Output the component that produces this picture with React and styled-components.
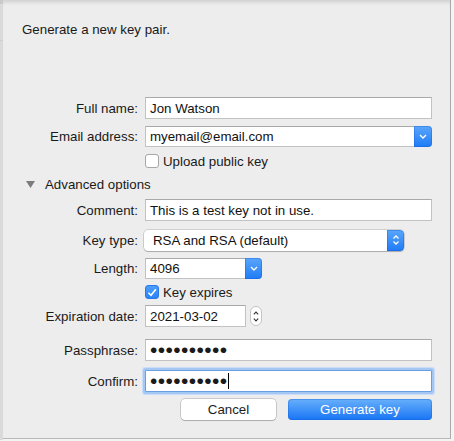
import React from "react";
import styled, { createGlobalStyle, css } from "styled-components";

const GlobalStyle = createGlobalStyle`
  html, body {
    margin: 0;
    padding: 0;
    background: #f4f4f4;
  }
  body {
    font-family: "Liberation Sans", Arial, sans-serif;
    font-size: 13.3px;
    color: #1a1a1a;
  }
`;

const Screen = styled.div`
  display: flex;
  width: 454px;
  height: 441px;
  overflow: hidden;
`;

const BehindStrip = styled.div`
  width: 3px;
  height: 440px;
  background: linear-gradient(#c9c9c9 0 4px, #dadada 4px 40px, #cfcfcf 40px 41px, #dadada 41px);
`;

const Dialog = styled.div`
  width: 448px;
  height: 439px;
  background: #ededed;
  border-right: 1px solid #a9a9a9;
  border-bottom: 1px solid #b9b9b9;
  box-shadow: inset 0 5px 4px -3px rgba(0, 0, 0, 0.14);
  display: flex;
  flex-direction: column;
  padding: 22px 18px 0 0;
  box-sizing: border-box;
`;

const Title = styled.div`
  margin-left: 19px;
  line-height: 16px;
  height: 16px;
`;

const Row = styled.div`
  display: flex;
  align-items: center;
  height: ${(p) => p.$h || 22}px;
  margin-top: ${(p) => p.$mt}px;
`;

const Label = styled.div`
  width: 135px;
  margin-right: 7px;
  text-align: right;
  white-space: nowrap;
`;

const Spacer = styled.div`
  width: 142px;
  flex: none;
`;

const fieldBase = css`
  height: 22px;
  box-sizing: border-box;
  background: #fff;
  border: 1px solid #c2c2c2;
  border-top-color: #a9a9a9;
  display: flex;
  align-items: center;
  padding-left: 4px;
  color: #111;
`;

const TextField = styled.div`
  ${fieldBase};
  flex: ${(p) => (p.$w ? "none" : 1)};
  width: ${(p) => (p.$w ? `${p.$w}px` : "auto")};
  ${(p) =>
    p.$focused &&
    css`
      border-color: #6a9fe6;
      border-radius: 1px;
      box-shadow: 0 0 0 2px #a5c7f4, 0 0 0 3px #c9ddf8;
    `}
`;

const Combo = styled.div`
  display: flex;
  flex: ${(p) => (p.$w ? "none" : 1)};
  width: ${(p) => (p.$w ? `${p.$w}px` : "auto")};
  height: 21px;
`;

const ComboText = styled.div`
  ${fieldBase};
  height: 21px;
  flex: 1;
  border-right: none;
`;

const BlueCap = styled.div`
  width: ${(p) => p.$w || 18}px;
  flex: none;
  height: 100%;
  border-radius: 0 4px 4px 0;
  background: linear-gradient(#5aa6fb, #1f7bf6);
  box-shadow: inset 0 0 0 1px rgba(16, 90, 210, 0.35);
  display: flex;
  align-items: center;
  justify-content: center;
`;

const Popup = styled.div`
  width: 260px;
  height: 21px;
  display: flex;
  margin-left: -1px;
  border-radius: 4px;
  background: #fff;
  box-shadow: 0 0 0 0.5px rgba(0, 0, 0, 0.25), 0 1px 1px rgba(0, 0, 0, 0.18);
  overflow: hidden;
`;

const PopupText = styled.div`
  flex: 1;
  display: flex;
  align-items: center;
  padding-left: 9px;
  color: #111;
`;

const CheckRow = styled.label`
  display: flex;
  align-items: center;
  gap: 4px;
`;

const Box = styled.span`
  width: 14px;
  height: 14px;
  box-sizing: border-box;
  border-radius: 3px;
  display: flex;
  align-items: center;
  justify-content: center;
  ${(p) =>
    p.$checked
      ? css`
          background: linear-gradient(#4c9dfb, #2a83f7);
          border: 1px solid #2a78e6;
        `
      : css`
          background: #fff;
          border: 1px solid #a6a6a6;
        `}
`;

const Disclosure = styled.div`
  display: flex;
  align-items: center;
  gap: 10px;
  padding-left: 23px;
`;

const Stepper = styled.div`
  width: 12px;
  height: 20px;
  margin-left: 4px;
  box-sizing: border-box;
  border: 1px solid #c4c4c4;
  border-radius: 6px;
  background: #fff;
  display: flex;
  flex-direction: column;
  align-items: center;
  justify-content: center;
  gap: 3px;
`;

const Dots = styled.span`
  font-size: 21px;
  line-height: 14px;
  letter-spacing: 0.4px;
  color: #1a1a1a;
`;

const Caret = styled.span`
  display: inline-block;
  width: 1px;
  height: 16px;
  background: #000;
`;

const ButtonRow = styled.div`
  display: flex;
  justify-content: flex-end;
  gap: 12px;
  margin-top: ${(p) => p.$mt}px;
`;

const Button = styled.button`
  font-family: inherit;
  font-size: 13.3px;
  height: 21px;
  width: ${(p) => p.$w}px;
  border-radius: 4px;
  padding: 0;
  ${(p) =>
    p.$primary
      ? css`
          color: #fff;
          border: none;
          background: linear-gradient(#68b0fb, #1874f5);
          box-shadow: inset 0 0 0 1px rgba(20, 95, 215, 0.35);
        `
      : css`
          color: #1d1d1d;
          background: #fff;
          border: none;
          box-shadow: 0 0 0 0.5px rgba(0, 0, 0, 0.3), 0 1px 1px rgba(0, 0, 0, 0.15);
        `}
`;

const ChevronDown = () => (
  <svg width="8" height="5" viewBox="0 0 8 5">
    <polyline points="1,1 4,4 7,1" fill="none" stroke="#fff" strokeWidth="1.4" />
  </svg>
);

const UpDown = ({ color = "#fff" }) => (
  <svg width="8" height="12" viewBox="0 0 8 12">
    <polyline points="1.5,4.5 4,2 6.5,4.5" fill="none" stroke={color} strokeWidth="1.3" />
    <polyline points="1.5,7.5 4,10 6.5,7.5" fill="none" stroke={color} strokeWidth="1.3" />
  </svg>
);

const StepArrow = ({ up }) => (
  <svg width="6" height="4" viewBox="0 0 6 4">
    <polyline
      points={up ? "0.8,3.3 3,1 5.2,3.3" : "0.8,0.7 3,3 5.2,0.7"}
      fill="none"
      stroke="#333"
      strokeWidth="1.1"
    />
  </svg>
);

const Check = () => (
  <svg width="10" height="9" viewBox="0 0 10 9">
    <polyline points="1.5,4.8 4,7.3 8.8,1.2" fill="none" stroke="#fff" strokeWidth="1.6" />
  </svg>
);

const Triangle = () => (
  <svg width="9" height="7" viewBox="0 0 9 7">
    <polygon points="0,0 9,0 4.5,7" fill="#7c7c7c" />
  </svg>
);

const App = () => {
  const secret = "••••••••••";
  return (
    <>
      <GlobalStyle />
      <Screen>
        <BehindStrip />
        <Dialog>
          <Title>Generate a new key pair.</Title>

          <Row $mt={59}>
            <Label>Full name:</Label>
            <TextField>Jon Watson</TextField>
          </Row>

          <Row $mt={6}>
            <Label>Email address:</Label>
            <Combo>
              <ComboText>myemail@email.com</ComboText>
              <BlueCap>
                <ChevronDown />
              </BlueCap>
            </Combo>
          </Row>

          <Row $mt={5} $h={18}>
            <Spacer />
            <CheckRow>
              <Box />
              Upload public key
            </CheckRow>
          </Row>

          <Row $mt={5} $h={18}>
            <Disclosure>
              <Triangle />
              Advanced options
            </Disclosure>
          </Row>

          <Row $mt={6}>
            <Label>Comment:</Label>
            <TextField>This is a test key not in use.</TextField>
          </Row>

          <Row $mt={8}>
            <Label>Key type:</Label>
            <Popup>
              <PopupText>RSA and RSA (default)</PopupText>
              <BlueCap $w={17}>
                <UpDown />
              </BlueCap>
            </Popup>
          </Row>

          <Row $mt={6}>
            <Label>Length:</Label>
            <Combo $w={117}>
              <ComboText>4096</ComboText>
              <BlueCap $w={17}>
                <ChevronDown />
              </BlueCap>
            </Combo>
          </Row>

          <Row $mt={4} $h={18}>
            <Spacer />
            <CheckRow>
              <Box $checked>
                <Check />
              </Box>
              Key expires
            </CheckRow>
          </Row>

          <Row $mt={4}>
            <Label>Expiration date:</Label>
            <TextField $w={101}>2021-03-02</TextField>
            <Stepper>
              <StepArrow up />
              <StepArrow />
            </Stepper>
          </Row>

          <Row $mt={12}>
            <Label>Passphrase:</Label>
            <TextField>
              <Dots>{secret}</Dots>
            </TextField>
          </Row>

          <Row $mt={9}>
            <Label>Confirm:</Label>
            <TextField $focused>
              <Dots>{secret}</Dots>
              <Caret />
            </TextField>
          </Row>

          <ButtonRow $mt={7}>
            <Button $w={95}>Cancel</Button>
            <Button $primary $w={144}>
              Generate key
            </Button>
          </ButtonRow>
        </Dialog>
      </Screen>
    </>
  );
};

export default App;
